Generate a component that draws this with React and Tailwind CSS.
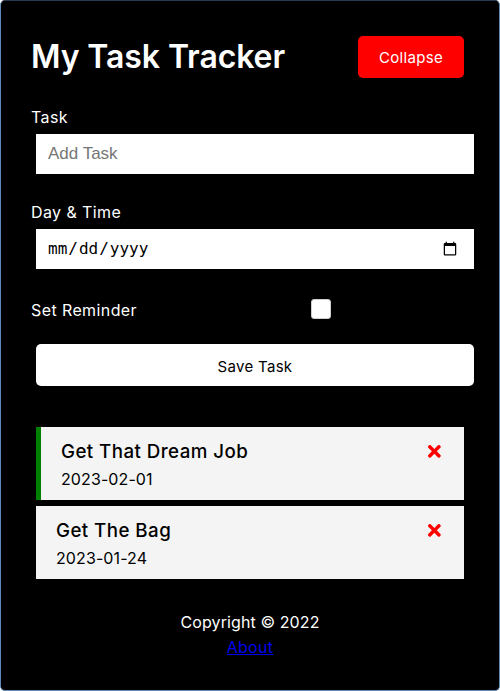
import React from "react";
import { FaTimes } from "react-icons/fa";

function Task({ text, day, reminder }) {
  return (
    <div
      className={`ml-[5px] w-[428px] h-[73px] bg-[#f4f4f4] py-[10px] pr-[20px] ${
        reminder ? "border-l-[5px] border-[#008000] pl-[20px]" : "pl-[20px]"
      }`}
    >
      <h3 className="flex items-center justify-between h-[28px] text-[18.72px] leading-[31px] font-medium tracking-[0.45px] text-black">
        <span>{text}</span>
        <FaTimes className="text-[#ff0000] mt-[1px]" />
      </h3>
      <p className="h-[25px] text-[16px] leading-[29px] tracking-[0.1px] text-black">{day}</p>
    </div>
  );
}

export default function App() {
  return (
    <div className="w-[500px] h-[691px] bg-black border border-[#5f8bb8] border-t-[#2a3a50] rounded-[5px] p-[30px] font-['Inter',sans-serif] text-white">
      <header className="flex items-center justify-between h-[52px]">
        <h1 className="text-[32px] font-semibold leading-[50px] tracking-[-0.1px]">My Task Tracker</h1>
        <button className="mr-[5px] w-[106px] h-[42px] bg-[#ff0000] rounded-[5px] text-[15px] leading-[44px] tracking-[0.3px] text-white">
          Collapse
        </button>
      </header>

      <form>
        <div className="mt-[20px]">
          <label className="block h-6 leading-[28px] text-[16px] tracking-[0.4px]">Task</label>
          <input
            type="text"
            placeholder="Add Task"
            className="block mt-[7px] ml-[5px] w-[438px] h-10 bg-white border-0 outline-none pl-[12px] font-['Liberation_Sans',sans-serif] text-[17px] text-black placeholder:text-[#757575]"
          />
        </div>
        <div className="mt-[24px]">
          <label className="block h-6 leading-[28px] text-[16px] tracking-[0.4px]">Day &amp; Time</label>
          <input
            type="date"
            className="block mt-[7px] ml-[5px] w-[438px] h-10 bg-white border-0 outline-none pl-[11px] pr-[14px] font-['DejaVu_Sans_Mono',monospace] text-[16px] text-black [color-scheme:light]"
          />
        </div>
        <div className="mt-[24px] h-[30px] flex items-center">
          <label className="w-[142px] h-6 leading-[28px] text-[16px] tracking-[0.4px]">Set Reminder</label>
          <div className="flex-1 mx-[5px] flex justify-center pt-[1px]">
            <span className="block w-5 h-5 bg-white rounded-[3px] border border-[#cfcfcf]"></span>
          </div>
        </div>
        <button
          type="button"
          className="block mt-[21px] ml-[5px] w-[438px] h-[42px] bg-white rounded-[5px] text-[15px] leading-[45px] tracking-[0.3px] text-black"
        >
          Save Task
        </button>
      </form>

      <div className="mt-[41px] flex flex-col gap-[6px]">
        <Task text="Get That Dream Job" day="2023-02-01" reminder />
        <Task text="Get The Bag" day="2023-01-24" />
      </div>

      <footer className="mt-[29px] text-center text-[16px] tracking-[0.1px]">
        <p className="h-6 leading-[28px]">Copyright © 2022</p>
        <a href="#" className="inline-block h-6 leading-[30px] text-[#0000ee] underline tracking-[0.3px]">
          About
        </a>
      </footer>
    </div>
  );
}
